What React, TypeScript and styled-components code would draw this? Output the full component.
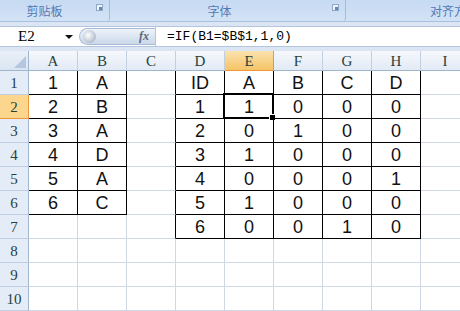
import styled, { createGlobalStyle } from "styled-components";

const GlobalStyle = createGlobalStyle`
    html, body {
        margin: 0;
        padding: 0;
        background: #ffffff;
        overflow: hidden;
    }
`;

const Window = styled.div`
    width: 460px;
    height: 311px;
    display: flex;
    flex-direction: column;
    background: #dbe5f3;
    overflow: hidden;
`;

const Ribbon = styled.div`
    height: 21px;
    display: flex;
    background: linear-gradient(#c6daf2, #d3e3f6);
    border-bottom: 1px solid #a7c0de;
`;

const Group = styled.div<{ $w: number; $pad?: number }>`
    position: relative;
    width: ${(p) => p.$w}px;
    flex-shrink: 0;
    display: flex;
    align-items: center;
    justify-content: ${(p) => (p.$pad ? "flex-start" : "center")};
    padding-left: ${(p) => p.$pad ?? 0}px;
    padding-right: ${(p) => (p.$pad ? 0 : 20)}px;
    margin-right: 4px;
    border-right: 1px solid #a4bcd9;
    border-radius: 0 0 3px 3px;
    color: #5279b3;
    font-family: "Noto Sans CJK SC", sans-serif;
    font-size: 12px;
    line-height: 1;
    padding-top: 1px;
    box-sizing: border-box;
    white-space: nowrap;
`;

const Launcher = styled.span`
    position: absolute;
    right: 6px;
    top: 4px;
    width: 7px;
    height: 7px;
    border: 1px solid #8ea8c8;
    background: #eef4fb;
    box-sizing: border-box;
    &::after {
        content: "";
        position: absolute;
        right: 0;
        bottom: 0;
        width: 3px;
        height: 3px;
        background: #6c86aa;
    }
`;

const FormulaRow = styled.div`
    height: 19px;
    margin-top: 4px;
    display: flex;
    align-items: stretch;
    background: #ffffff;
    border-top: 1px solid #b3c6de;
    border-bottom: 1px solid #b3c6de;
`;

const NameBox = styled.div`
    width: 79px;
    display: flex;
    align-items: center;
    font-family: "Liberation Serif", serif;
    font-size: 15px;
    color: #000;
    padding-left: 18px;
    box-sizing: border-box;
    position: relative;
`;

const DropArrow = styled.span`
    position: absolute;
    left: 65px;
    top: 8px;
    width: 0;
    height: 0;
    border-left: 4px solid transparent;
    border-right: 4px solid transparent;
    border-top: 4px solid #111;
`;

const Grip = styled.div`
    width: 76px;
    margin: 1px 0;
    border-radius: 9px 0 0 9px;
    background: linear-gradient(#eef3fa, #cbd8ea);
    border: 1px solid #a9bcd6;
    border-right: none;
    display: flex;
    align-items: center;
    justify-content: space-between;
    padding: 0 6px 0 3px;
    box-sizing: border-box;
`;

const Knob = styled.span`
    width: 13px;
    height: 13px;
    border-radius: 50%;
    background: radial-gradient(circle at 40% 40%, #ffffff, #b4bfcc 70%, #97a3b3);
`;

const Fx = styled.span`
    font-family: "Liberation Serif", serif;
    font-style: italic;
    font-weight: bold;
    font-size: 12px;
    color: #5c6777;
`;

const Formula = styled.div`
    flex: 1;
    display: flex;
    align-items: center;
    padding-left: 11px;
    border-left: 1px solid #b3c6de;
    font-family: "Liberation Mono", monospace;
    font-size: 13px;
    color: #000;
`;

const Sheet = styled.div`
    margin-top: 4px;
    display: grid;
    grid-template-columns: 29px repeat(9, 49px);
    grid-template-rows: 20px repeat(10, 24px);
    background: #ffffff;
`;

const Corner = styled.div`
    position: relative;
    background: linear-gradient(#e9eff8, #dbe5f2);
    border-right: 1px solid #9eb6ce;
    border-bottom: 1px solid #9eb6ce;
    box-sizing: border-box;
    &::after {
        content: "";
        position: absolute;
        right: 2px;
        bottom: 2px;
        width: 0;
        height: 0;
        border-left: 12px solid transparent;
        border-bottom: 12px solid #b5c7de;
    }
`;

const ColHead = styled.div<{ $active?: boolean }>`
    display: flex;
    align-items: center;
    justify-content: center;
    box-sizing: border-box;
    background: ${(p) =>
        p.$active ? "linear-gradient(#fbe2ae, #f5c467)" : "linear-gradient(#f6f8fc, #e2eaf5)"};
    border-right: 1px solid ${(p) => (p.$active ? "#f29536" : "#c0cfe1")};
    border-bottom: 1px solid ${(p) => (p.$active ? "#f29536" : "#9eb6ce")};
    font-family: "Liberation Serif", serif;
    font-size: 15px;
    color: #27413e;
    padding-top: 1px;
`;

const RowHead = styled.div<{ $active?: boolean }>`
    display: flex;
    align-items: center;
    justify-content: center;
    box-sizing: border-box;
    background: ${(p) => (p.$active ? "#fdd68d" : "#e4ecf7")};
    border-right: 1px solid ${(p) => (p.$active ? "#f29536" : "#9eb6ce")};
    border-bottom: 1px solid ${(p) => (p.$active ? "#f29536" : "#c0cfe1")};
    font-family: "Liberation Serif", serif;
    font-size: 15px;
    color: #27413e;
    padding-top: 2px;
`;

const Cell = styled.div<{ $r: string; $b: string }>`
    position: relative;
    display: flex;
    align-items: center;
    justify-content: center;
    box-sizing: border-box;
    border-right: 1px solid ${(p) => p.$r};
    border-bottom: 1px solid ${(p) => p.$b};
    font-family: "Liberation Sans", Arial, sans-serif;
    font-size: 18px;
    color: #111;
    padding-top: 1px;
`;

const Selection = styled.span`
    position: absolute;
    left: -2px;
    top: -2px;
    right: -1px;
    bottom: -1px;
    border: 2px solid #000;
    box-shadow: inset 0 0 0 1px #fff;
    pointer-events: none;
    &::after {
        content: "";
        position: absolute;
        right: -4px;
        bottom: -4px;
        width: 5px;
        height: 5px;
        background: #000;
        border: 1px solid #fff;
    }
`;

const cols = ["A", "B", "C", "D", "E", "F", "G", "H", "I"];

const data: Record<string, string[]> = {
    A: ["1", "2", "3", "4", "5", "6"],
    B: ["A", "B", "A", "D", "A", "C"],
    D: ["ID", "1", "2", "3", "4", "5", "6"],
    E: ["A", "1", "0", "1", "0", "1", "0"],
    F: ["B", "0", "1", "0", "0", "0", "0"],
    G: ["C", "0", "0", "0", "0", "0", "1"],
    H: ["D", "0", "0", "0", "1", "0", "0"],
};

// tables that carry black borders: [firstCol, lastCol, firstRow, lastRow]
const tables = [
    [0, 1, 1, 6],
    [3, 7, 1, 7],
];

const inTable = (c: number, r: number) =>
    tables.some(([c0, c1, r0, r1]) => c >= c0 && c <= c1 && r >= r0 && r <= r1);

const GRID = "#d0d7e5";

export default function App() {
    const rows = Array.from({ length: 10 }, (_, i) => i + 1);

    return (
        <Window>
            <GlobalStyle />
            <Ribbon>
                <Group $w={110}>
                    剪贴板
                    <Launcher />
                </Group>
                <Group $w={232}>
                    字体
                    <Launcher />
                </Group>
                <Group $w={140} $pad={80}>
                    对齐方式
                </Group>
            </Ribbon>
            <FormulaRow>
                <NameBox>
                    E2
                    <DropArrow />
                </NameBox>
                <Grip>
                    <Knob />
                    <Fx>fx</Fx>
                </Grip>
                <Formula>=IF(B1=$B$1,1,0)</Formula>
            </FormulaRow>
            <Sheet>
                <Corner />
                {cols.map((c) => (
                    <ColHead key={c} $active={c === "E"}>
                        {c}
                    </ColHead>
                ))}
                {rows.map((r) => [
                    <RowHead key={`h${r}`} $active={r === 2}>
                        {r}
                    </RowHead>,
                    ...cols.map((c, ci) => {
                        const here = inTable(ci, r);
                        const right = here || inTable(ci + 1, r) ? "#000" : GRID;
                        const bottom = here || inTable(ci, r + 1) ? "#000" : GRID;
                        const value = data[c]?.[r - 1] ?? "";
                        return (
                            <Cell key={`${c}${r}`} $r={right} $b={bottom}>
                                {value}
                                {c === "E" && r === 2 && <Selection />}
                            </Cell>
                        );
                    }),
                ])}
            </Sheet>
        </Window>
    );
}
